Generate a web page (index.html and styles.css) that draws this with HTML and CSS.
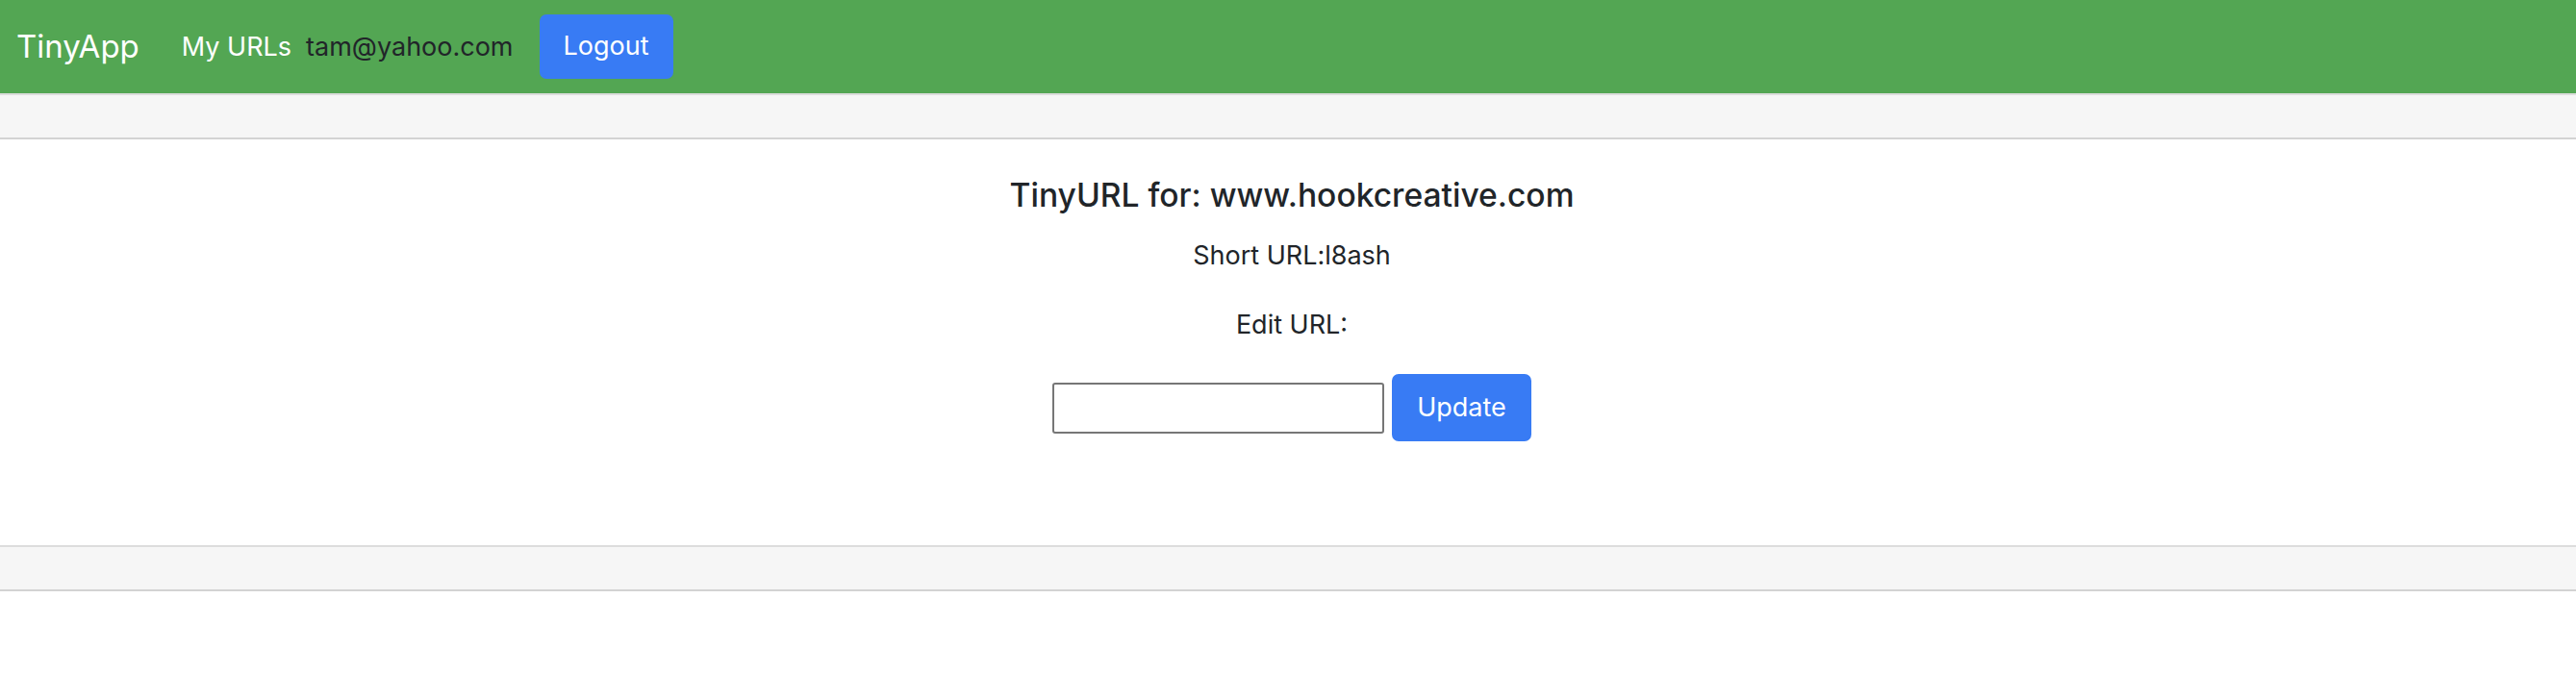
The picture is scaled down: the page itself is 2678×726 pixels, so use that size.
FILE: index.html
```html
<!DOCTYPE html>
<html lang="en">
<head>
<meta charset="utf-8">
<title>TinyApp</title>
<link rel="stylesheet" href="styles.css">
</head>
<body>
<nav class="navbar">
  <a class="brand" href="#">TinyApp</a>
  <a class="nav-link" href="#">My URLs</a>
  <span class="user">tam@yahoo.com</span>
  <button class="btn" type="button">Logout</button>
</nav>
<div class="band"></div>
<main class="content">
  <h5 class="title">TinyURL for: www.hookcreative.com</h5>
  <p class="line">Short URL:l8ash</p>
  <p class="line">Edit URL:</p>
  <form class="edit-form">
    <input class="url-input" type="text" name="longURL">
    <button class="btn" type="submit">Update</button>
  </form>
</main>
<div class="band"></div>
</body>
</html>
```

FILE: styles.css
```css
html, body {
  margin: 0;
  padding: 0;
  background: #ffffff;
  font-family: Inter, "Noto Sans", "Liberation Sans", sans-serif;
  color: #212529;
}

.navbar {
  display: flex;
  align-items: center;
  height: 97px;
  padding: 0 17px;
  background: #53a653;
  box-sizing: border-box;
}

.brand {
  font-size: 33px;
  color: #ffffff;
  text-decoration: none;
  margin-right: 44px;
  line-height: 1.5;
}

.nav-link {
  font-size: 27px;
  color: #ffffff;
  text-decoration: none;
  margin-right: 15px;
}

.user {
  font-size: 27px;
  color: #212529;
  margin-right: 27px;
}

.btn {
  font-family: inherit;
  font-size: 27px;
  line-height: 1.5;
  color: #ffffff;
  background: #387bf4;
  border: 2px solid #387bf4;
  border-radius: 7px;
  padding: 11px 23px;
  cursor: pointer;
}

.band {
  height: 44px;
  background: #f6f6f6;
  border-top: 2px solid #dddddd;
  border-bottom: 2px solid #d3d3d3;
}

.content {
  text-align: center;
  padding: 37px 0 108px 8px;
}

.title {
  font-size: 33.6px;
  font-weight: 500;
  line-height: 42px;
  margin: 0 0 21px;
}

.line {
  font-size: 27px;
  line-height: 42px;
  margin: 0 0 30px;
}

.edit-form {
  display: flex;
  justify-content: center;
  align-items: center;
  gap: 8px;
  margin: 0;
}

.url-input {
  width: 345px;
  height: 53px;
  box-sizing: border-box;
  border: 2px solid #767676;
  border-radius: 3px;
  font-size: 27px;
  padding: 2px 4px;
}

.edit-form .btn {
  padding: 10px 24px;
  height: 70px;
}
```
